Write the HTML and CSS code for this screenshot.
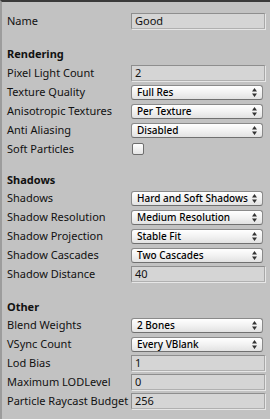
FILE: index.html
```html
<!DOCTYPE html>
<html>
<head>
<meta charset="utf-8">
<link rel="stylesheet" href="styles.css">
</head>
<body>
<div class="panel">
  <div class="row"><span class="label">Name</span><div class="field">Good</div></div>
  <div class="spacer first"></div>
  <div class="row head"><span class="label">Rendering</span></div>
  <div class="row"><span class="label">Pixel Light Count</span><div class="field">2</div></div>
  <div class="row"><span class="label">Texture Quality</span><div class="popup"><span>Full Res</span><svg class="arr" width="5" height="9" viewBox="0 0 5 9"><path d="M2.5 0 L5 3.5 L0 3.5 Z M0 5.5 L5 5.5 L2.5 9 Z" fill="#333"/></svg></div></div>
  <div class="row"><span class="label">Anisotropic Textures</span><div class="popup"><span>Per Texture</span><svg class="arr" width="5" height="9" viewBox="0 0 5 9"><path d="M2.5 0 L5 3.5 L0 3.5 Z M0 5.5 L5 5.5 L2.5 9 Z" fill="#333"/></svg></div></div>
  <div class="row"><span class="label">Anti Aliasing</span><div class="popup"><span>Disabled</span><svg class="arr" width="5" height="9" viewBox="0 0 5 9"><path d="M2.5 0 L5 3.5 L0 3.5 Z M0 5.5 L5 5.5 L2.5 9 Z" fill="#333"/></svg></div></div>
  <div class="row"><span class="label">Soft Particles</span><div class="check"></div></div>
  <div class="spacer s2"></div>
  <div class="row head h2"><span class="label">Shadows</span></div>
  <div class="row"><span class="label">Shadows</span><div class="popup"><span>Hard and Soft Shadows</span><svg class="arr" width="5" height="9" viewBox="0 0 5 9"><path d="M2.5 0 L5 3.5 L0 3.5 Z M0 5.5 L5 5.5 L2.5 9 Z" fill="#333"/></svg></div></div>
  <div class="row"><span class="label">Shadow Resolution</span><div class="popup"><span>Medium Resolution</span><svg class="arr" width="5" height="9" viewBox="0 0 5 9"><path d="M2.5 0 L5 3.5 L0 3.5 Z M0 5.5 L5 5.5 L2.5 9 Z" fill="#333"/></svg></div></div>
  <div class="row"><span class="label">Shadow Projection</span><div class="popup"><span>Stable Fit</span><svg class="arr" width="5" height="9" viewBox="0 0 5 9"><path d="M2.5 0 L5 3.5 L0 3.5 Z M0 5.5 L5 5.5 L2.5 9 Z" fill="#333"/></svg></div></div>
  <div class="row"><span class="label">Shadow Cascades</span><div class="popup"><span>Two Cascades</span><svg class="arr" width="5" height="9" viewBox="0 0 5 9"><path d="M2.5 0 L5 3.5 L0 3.5 Z M0 5.5 L5 5.5 L2.5 9 Z" fill="#333"/></svg></div></div>
  <div class="row"><span class="label">Shadow Distance</span><div class="field">40</div></div>
  <div class="spacer s3"></div>
  <div class="row head h2"><span class="label">Other</span></div>
  <div class="row"><span class="label">Blend Weights</span><div class="popup"><span>2 Bones</span><svg class="arr" width="5" height="9" viewBox="0 0 5 9"><path d="M2.5 0 L5 3.5 L0 3.5 Z M0 5.5 L5 5.5 L2.5 9 Z" fill="#333"/></svg></div></div>
  <div class="row"><span class="label">VSync Count</span><div class="popup"><span>Every VBlank</span><svg class="arr" width="5" height="9" viewBox="0 0 5 9"><path d="M2.5 0 L5 3.5 L0 3.5 Z M0 5.5 L5 5.5 L2.5 9 Z" fill="#333"/></svg></div></div>
  <div class="row"><span class="label">Lod Bias</span><div class="field">1</div></div>
  <div class="row"><span class="label">Maximum LODLevel</span><div class="field">0</div></div>
  <div class="row"><span class="label">Particle Raycast Budget</span><div class="field">256</div></div>
</div>
</body>
</html>
```
FILE: styles.css
```css
html, body {
  margin: 0;
  padding: 0;
  background: #c2c2c2;
}
.panel {
  box-sizing: border-box;
  width: 270px;
  height: 419px;
  border-top: 2px solid #3a3a3a;
  border-left: 2px solid #9c9c9c;
  padding: 11px 5px 0 5px;
  background: #c2c2c2;
  font-family: "Noto Sans", sans-serif;
  font-size: 11px;
  color: #111;
  overflow: hidden;
}
.row {
  display: flex;
  align-items: center;
  height: 16px;
  margin-bottom: 3px;
}
.label {
  width: 124px;
  flex: none;
  white-space: nowrap;
  line-height: 16px;
}
.head .label {
  font-weight: bold;
}
.head.h2 {
  margin-bottom: 2px;
}
.spacer {
  height: 13px;
}
.spacer.first {
  height: 14px;
}
.spacer.s2 {
  height: 12px;
}
.spacer.s3 {
  height: 14px;
}
.field {
  flex: 1;
  box-sizing: border-box;
  height: 16px;
  border: 1px solid #8e8e8e;
  border-right-color: #a8a8a8;
  border-bottom-color: #b0b0b0;
  background: #d5d5d5;
  box-shadow: 1px 1px 0 #e6e6e6;
  padding-left: 3px;
  line-height: 14px;
  font-size: 11px;
  white-space: nowrap;
}
.popup {
  flex: 1;
  box-sizing: border-box;
  height: 15px;
  margin-top: 1px;
  margin-right: 2px;
  border: 1px solid #8a8a8a;
  border-bottom-color: #707070;
  border-radius: 3px;
  background: linear-gradient(#ffffff, #f2f2f2 50%, #e2e2e2);
  display: flex;
  align-items: center;
  justify-content: space-between;
  padding: 0 5px 0 5px;
  font-size: 10px;
  font-weight: 500;
  color: #000;
  line-height: 13px;
  white-space: nowrap;
}
.arr {
  display: block;
  flex: none;
}
.check {
  box-sizing: border-box;
  width: 12px;
  height: 12px;
  margin-left: 1px;
  border: 1px solid #6e6e6e;
  border-radius: 2px;
  background: linear-gradient(#ffffff, #e4e4e4);
}
```
